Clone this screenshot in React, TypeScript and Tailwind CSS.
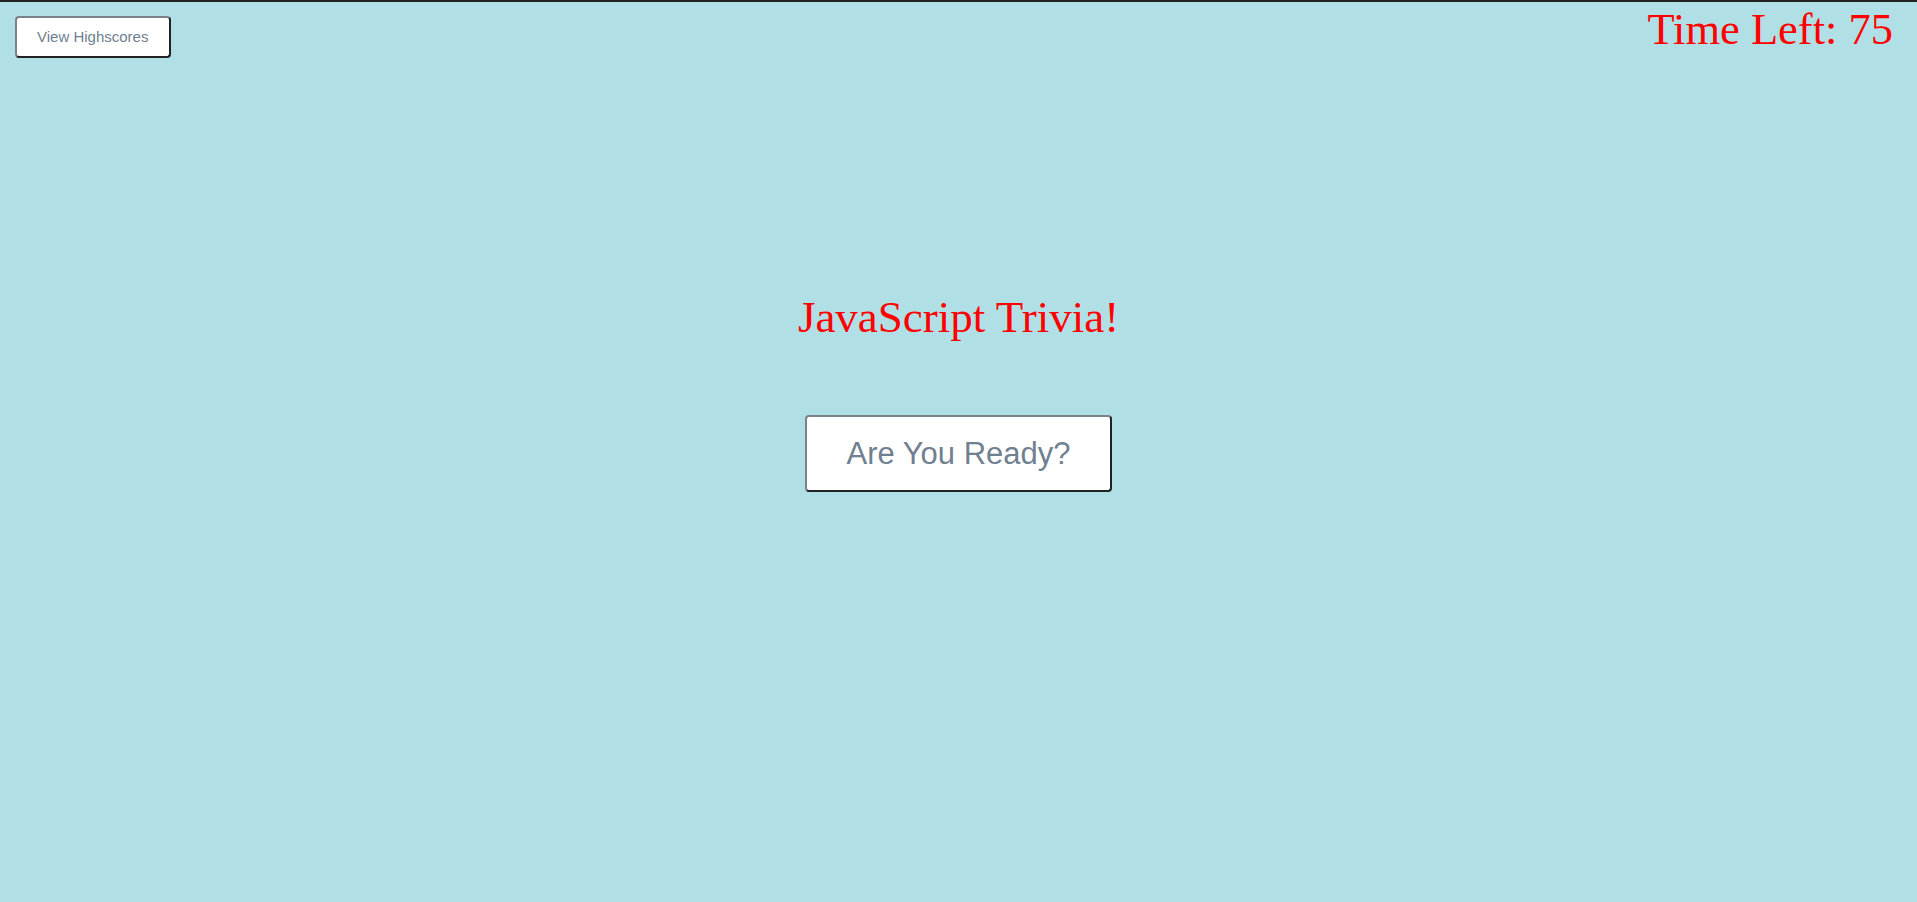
export default function App() {

 return (

  <div
   className="
    min-h-screen
    bg-[#b0e0e6]
    border-t-2
    border-[#222]
    font-['Liberation_Sans',Arial,sans-serif]
   "
  >

   {/* HEADER */}

   <header
    className="
     flex
     items-start
     justify-between
     pl-[15px]
     pr-[24px]
    "
   >

    <button
     className="
      mt-[14px]
      bg-white
      text-[#708090]
      text-[15px]
      leading-[18px]
      pl-[20px]
      pr-[21px]
      py-[10px]
      rounded
      border-2
      border-t-[#7a8487]
      border-l-[#7a8487]
      border-r-[#222]
      border-b-[#222]
     "
    >

     View Highscores

    </button>


    <div
     className="
      text-[44.5px]
      text-[#ff0000]
      font-['Liberation_Serif','Times_New_Roman',serif]
      leading-[55px]
     "
    >

     Time Left: 75

    </div>

   </header>


   {/* START SCREEN */}

   <main
    className="
     flex
     flex-col
     items-center
    "
   >

    <h1
     className="
      mt-[233px]
      text-[45px]
      leading-[52px]
      text-[#ff0000]
      font-['Liberation_Serif','Times_New_Roman',serif]
     "
    >

     JavaScript Trivia!

    </h1>


    <button
     className="
      mt-[72px]
      bg-white
      text-[#708090]
      text-[31px]
      leading-[35px]
      px-[39px]
      py-[19px]
      rounded
      border-2
      border-t-[#7a8487]
      border-l-[#7a8487]
      border-r-[#222]
      border-b-[#222]
     "
    >

     Are You Ready?

    </button>

   </main>

  </div>

 )
}
